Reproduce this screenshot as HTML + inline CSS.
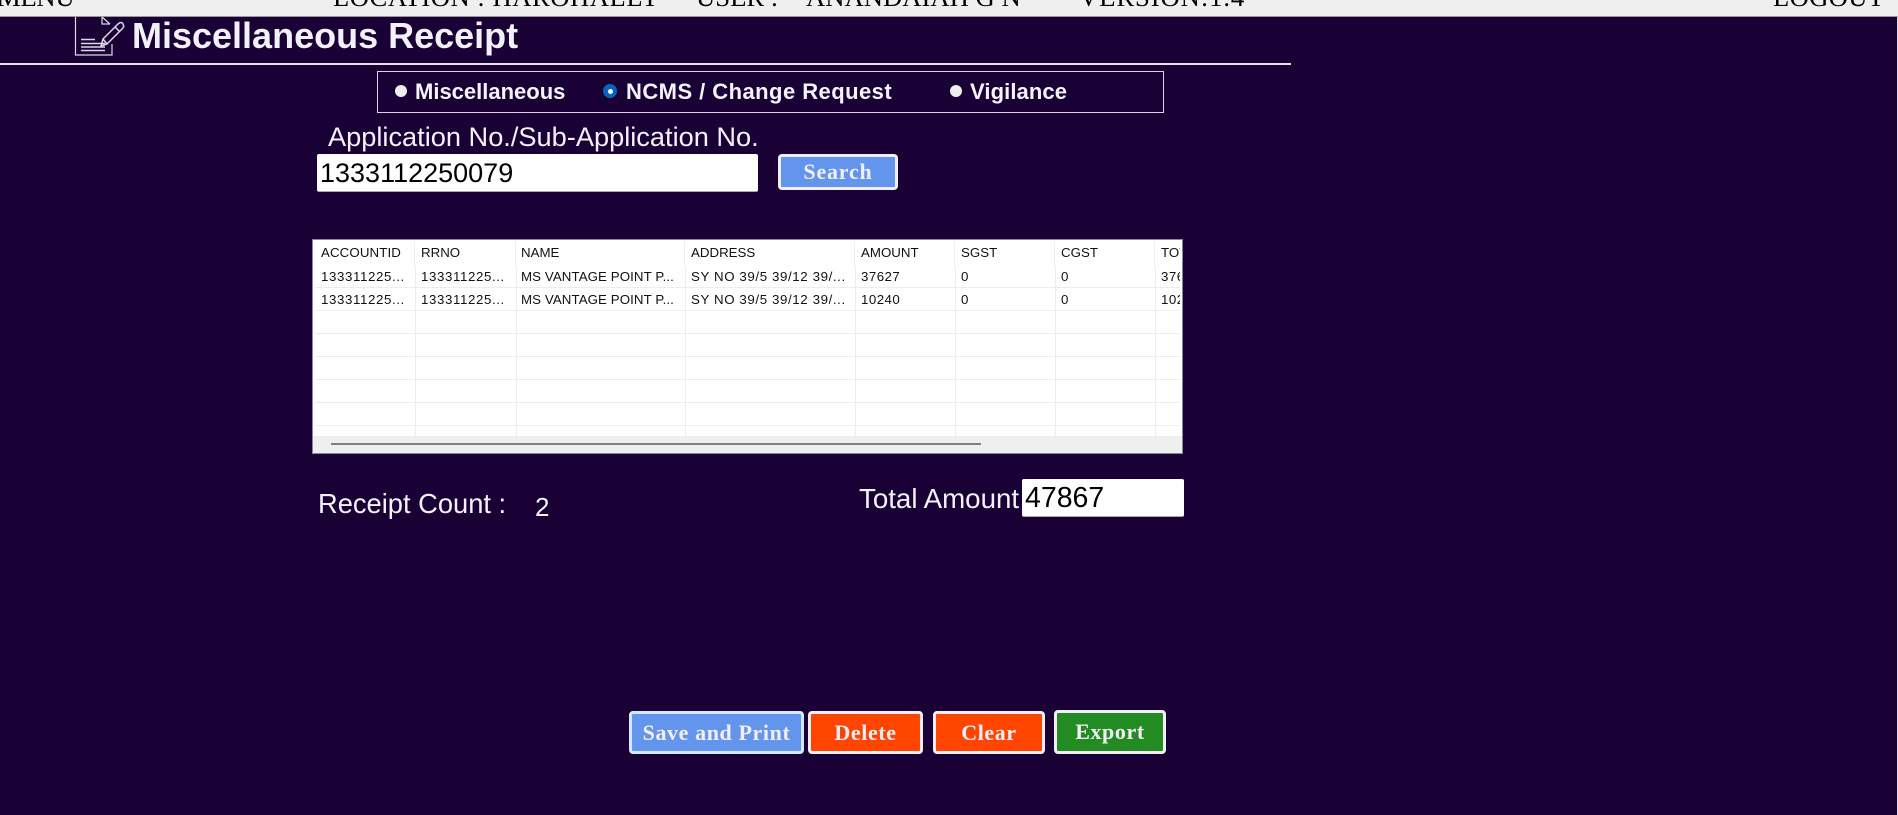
<!DOCTYPE html>
<html><head><meta charset="utf-8"><title>Miscellaneous Receipt</title>
<style>
html,body{margin:0;padding:0;width:1898px;height:815px;overflow:hidden;background:#190035;font-family:"Liberation Sans",Arial,sans-serif}
.a{position:absolute;white-space:nowrap}
#hdr{position:absolute;left:0;top:0;width:1898px;height:16px;background:#efefef;border-bottom:1px solid #999;overflow:hidden}
#hdr span{position:absolute;top:-22px;font:26.67px/38px "Liberation Serif",serif;color:#000;white-space:nowrap}
.w{color:#f4f2f8}
.radio{position:absolute;width:12px;height:12px;border-radius:50%;background:#eee}
.radio.on{background:#0a62bd;width:14px;height:14px}
.radio.on:after{content:"";position:absolute;left:4.5px;top:4.5px;width:5px;height:5px;border-radius:50%;background:#fff}
.rl{font-weight:bold;font-size:22px;line-height:26px;top:78px;color:#f6f4fa}
.inp{position:absolute;background:#fff;color:#000;border-radius:2px;border-bottom:1px solid #aaa;box-sizing:border-box;white-space:nowrap}
.btn{position:absolute;box-sizing:border-box;border:3px solid #f3eef5;border-radius:4px;color:#f3eef5;font:bold 22px/1 "Liberation Serif",serif;text-align:center;white-space:nowrap;display:flex;align-items:center;justify-content:center}
#grid{position:absolute;left:312px;top:239px;width:871px;height:215px;box-sizing:border-box;border:1px solid #8a86a0;background:#fff;overflow:hidden}
#grid .t{position:absolute;font-size:13.3px;line-height:18px;color:#111;white-space:nowrap}
#grid .n{letter-spacing:.6px}
#grid .m{letter-spacing:.45px}
#grid .h{position:absolute;background:#eceded;height:1px;left:2px;width:865px}
#grid .v{position:absolute;background:#eceded;width:1px;top:26px;height:170px}
#grid .hv{position:absolute;background:#eeeeee;width:1px;top:1px;height:25px}
#clip{position:absolute;left:0;top:0;width:867px;height:196px;overflow:hidden}
#sb{position:absolute;left:0;top:196px;width:869px;height:17px;background:#efefef}
#th{position:absolute;left:18px;top:7px;width:650px;height:2px;background:#808080}
</style></head><body>
<div id="hdr">
<span style="left:-3px;letter-spacing:-.3px">MENU</span>
<span style="left:333px;letter-spacing:.5px">LOCATION : HAROHALLY</span>
<span style="left:696px">USER :</span>
<span style="left:806px">ANANDAIAH G N</span>
<span style="left:1079px;letter-spacing:.9px">VERSION:1.4</span>
<span style="left:1773px;letter-spacing:.3px">LOGOUT</span>
</div>

<svg class="a" style="left:70px;top:14px" width="60" height="46" viewBox="70 14 60 46" fill="none" stroke="#dcd8e6" stroke-width="1.2">
<path d="M75.5 17V55H112V44"/>
<path d="M102 17V24H110M102 17L110 24"/>
<path d="M81 39.5H95M81 43.5H105M81 47H105M81 50.5H105" stroke-width="1.4"/>
<path d="M101 46L103 39L118 24C120 22 122 22 123 24C124 26 124 27 122 29L107 44ZM103 39L107 44M115 27L120 32" stroke-width="1.5"/>
</svg>
<div class="a" style="left:132px;top:14px;font-size:36px;font-weight:bold;line-height:43px;color:#f3f1f8">Miscellaneous Receipt</div>
<div class="a" style="left:0;top:63px;width:1291px;height:2px;background:#e6e3ea"></div>

<div class="a" style="left:377px;top:71px;width:785px;height:40px;border:1px solid #d8d3e2"></div>
<div class="radio" style="left:395px;top:85px"></div>
<div class="a rl" style="left:415px;top:79px">Miscellaneous</div>
<div class="radio on" style="left:603px;top:84px"></div>
<div class="a rl" style="left:626px;top:79px;letter-spacing:.45px">NCMS / Change Request</div>
<div class="radio" style="left:950px;top:85px"></div>
<div class="a rl" style="left:970px;top:79px;letter-spacing:.1px">Vigilance</div>

<div class="a w" style="left:328px;top:121px;font-size:27.2px;line-height:32px">Application No./Sub-Application No.</div>
<div class="inp" style="left:317px;top:154px;width:441px;height:38px;font-size:27px;line-height:38px;padding-left:3px">1333112250079</div>
<div class="btn" style="left:778px;top:154px;width:120px;height:36px;background:#6495ed;letter-spacing:.8px">Search</div>

<div id="grid">
<div id="clip">
<span class="t" style="left:8px;top:4px;letter-spacing:.1px">ACCOUNTID</span>
<span class="t" style="left:108px;top:4px">RRNO</span>
<span class="t" style="left:208px;top:4px">NAME</span>
<span class="t" style="left:378px;top:4px">ADDRESS</span>
<span class="t" style="left:548px;top:4px">AMOUNT</span>
<span class="t" style="left:648px;top:4px">SGST</span>
<span class="t" style="left:748px;top:4px">CGST</span>
<span class="t" style="left:848px;top:4px">TOTAL</span>

<span class="t n" style="left:8px;top:28px">133311225...</span>
<span class="t n" style="left:108px;top:28px">133311225...</span>
<span class="t" style="left:208px;top:28px;letter-spacing:.08px">MS VANTAGE POINT P...</span>
<span class="t n" style="left:378px;top:28px">SY NO 39/5 39/12 39/...</span>
<span class="t m" style="left:548px;top:28px">37627</span>
<span class="t m" style="left:648px;top:28px">0</span>
<span class="t m" style="left:748px;top:28px">0</span>
<span class="t m" style="left:848px;top:28px">37627</span>

<span class="t n" style="left:8px;top:51px">133311225...</span>
<span class="t n" style="left:108px;top:51px">133311225...</span>
<span class="t" style="left:208px;top:51px;letter-spacing:.08px">MS VANTAGE POINT P...</span>
<span class="t n" style="left:378px;top:51px">SY NO 39/5 39/12 39/...</span>
<span class="t m" style="left:548px;top:51px">10240</span>
<span class="t m" style="left:648px;top:51px">0</span>
<span class="t m" style="left:748px;top:51px">0</span>
<span class="t m" style="left:848px;top:51px">10240</span>

<i class="h" style="top:47px"></i><i class="h" style="top:70px"></i><i class="h" style="top:93px"></i><i class="h" style="top:116px"></i><i class="h" style="top:139px"></i><i class="h" style="top:162px"></i><i class="h" style="top:185px"></i>
<i class="hv" style="left:101px"></i><i class="hv" style="left:202px"></i><i class="hv" style="left:371px"></i><i class="hv" style="left:541px"></i><i class="hv" style="left:641px"></i><i class="hv" style="left:741px"></i><i class="hv" style="left:841px"></i>
<i class="v" style="left:102px"></i><i class="v" style="left:203px"></i><i class="v" style="left:372px"></i><i class="v" style="left:542px"></i><i class="v" style="left:642px"></i><i class="v" style="left:742px"></i><i class="v" style="left:842px"></i>
</div>
<div id="sb"><div id="th"></div></div>
</div>

<div class="a w" style="left:318px;top:488px;font-size:27.3px;line-height:32px">Receipt Count :</div>
<div class="a w" style="left:535px;top:491px;font-size:26px;line-height:32px">2</div>
<div class="a w" style="left:859px;top:483px;font-size:27.7px;line-height:32px">Total Amount</div>
<div class="inp" style="left:1022px;top:479px;width:162px;height:38px;font-size:28.5px;line-height:38px;padding-left:3px">47867</div>

<div class="btn" style="left:629px;top:711px;width:175px;height:43px;background:#6495ed;border-color:#d5e8fb;letter-spacing:.6px">Save and Print</div>
<div class="btn" style="left:808px;top:711px;width:115px;height:43px;background:#ff4500;letter-spacing:.6px">Delete</div>
<div class="btn" style="left:933px;top:711px;width:112px;height:43px;background:#ff4500;letter-spacing:.6px">Clear</div>
<div class="btn" style="left:1054px;top:710px;width:112px;height:44px;background:#228b22;letter-spacing:.6px">Export</div>
<div class="a" style="left:1897px;top:17px;width:1px;height:798px;background:#dcdcdc"></div>
</body></html>
